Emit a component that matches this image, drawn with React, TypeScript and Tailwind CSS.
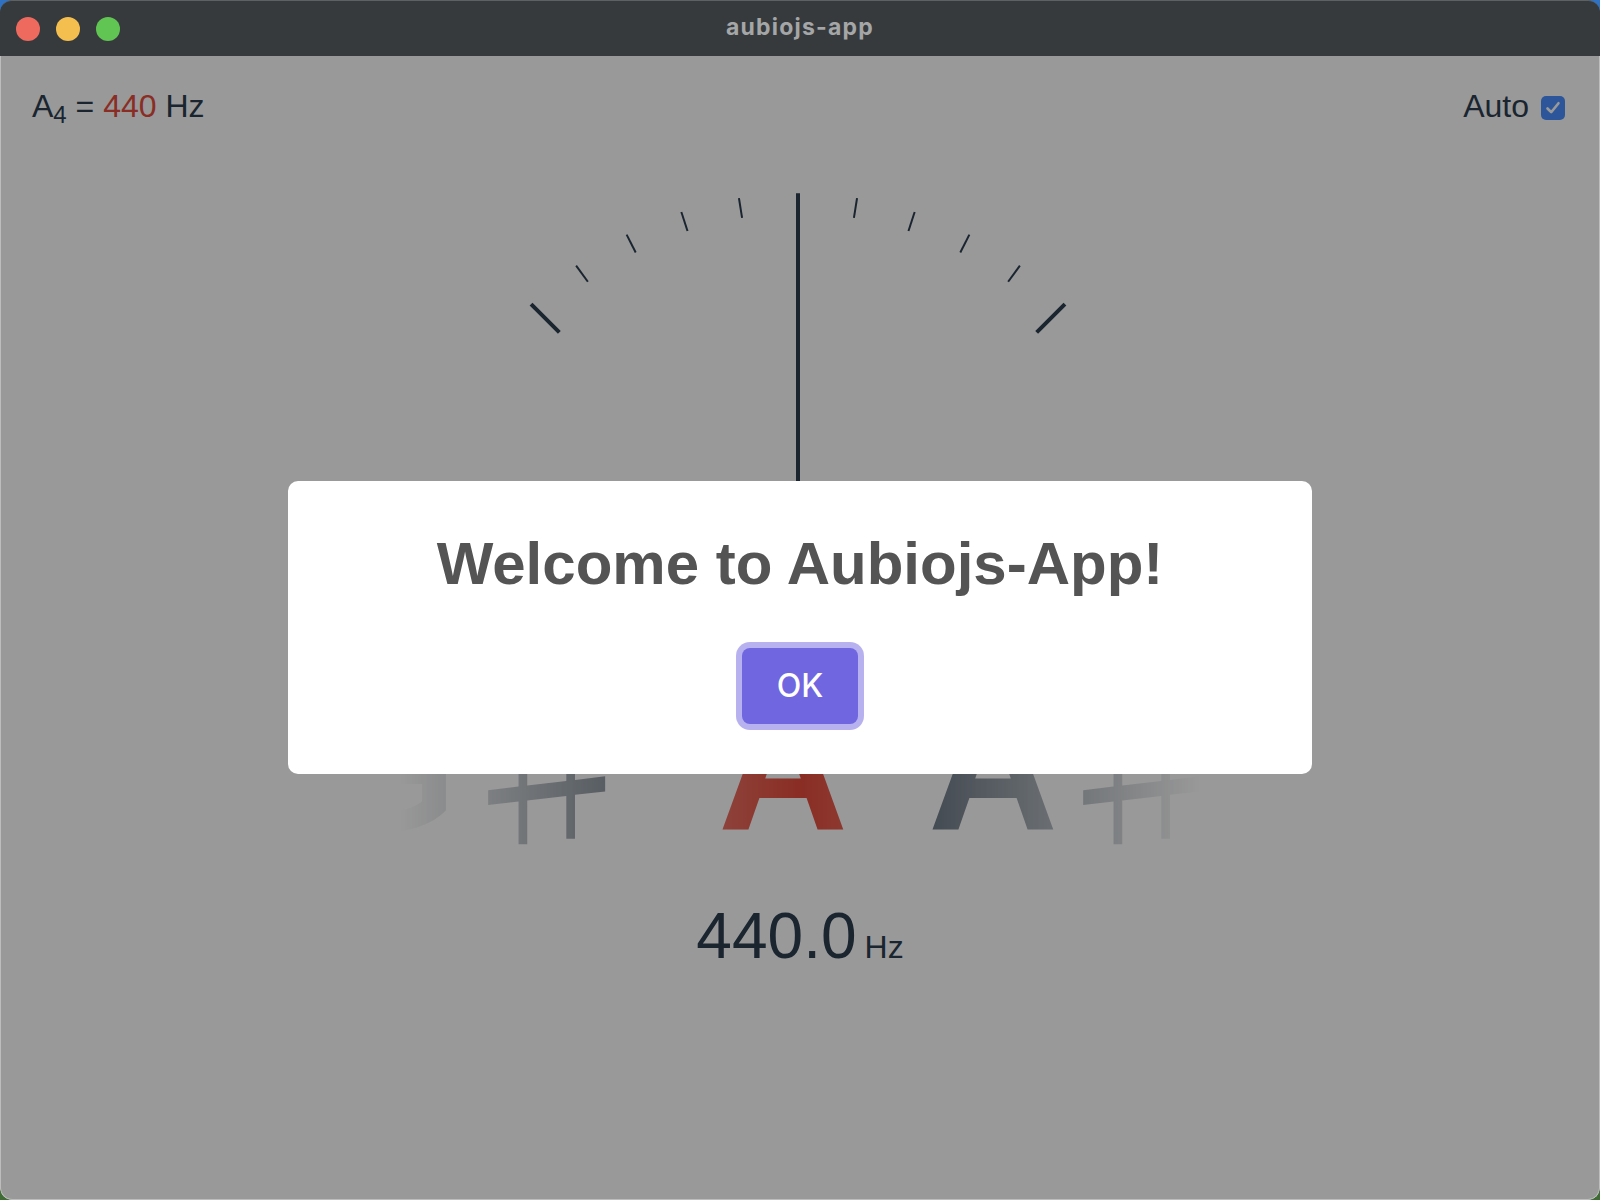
import React from 'react';

// tuner colours (before the dialog backdrop darkens them)
const INK = '#2c3e50';
const ACTIVE = '#e74c3c';

// scale marks every 9deg from -45 to 45, strong at the ends and the middle
const marks = Array.from({ length: 11 }, (_, i) => i * 9 - 45);

const Meter: React.FC = () => {
    const cx = 398;
    const cy = 381;
    const r = 377.5;
    return (
        <svg width="800" height="385" viewBox="0 0 800 385" className="mx-auto block shrink-0">
            {marks.map((deg) => {
                const strong = deg % 45 === 0;
                const len = strong ? 40 : 20;
                const rad = (deg * Math.PI) / 180;
                const s = Math.sin(rad);
                const c = Math.cos(rad);
                return (
                    <line
                        key={deg}
                        x1={cx + r * s}
                        y1={cy - r * c}
                        x2={cx + (r - len) * s}
                        y2={cy - (r - len) * c}
                        stroke={INK}
                        strokeWidth={strong ? 4 : 2}
                    />
                );
            })}
            {/* pointer, sitting at 0 cents */}
            <rect x={cx - 2} y={cy - r} width="4" height={r} fill={INK} />
        </svg>
    );
};

interface NoteProps {
    name: string;
    sharp?: boolean;
    active?: boolean;
    padRight?: string;
    sharpShift?: string;
}

const Note: React.FC<NoteProps> = ({ name, sharp, active, padRight = 'pr-[60px]', sharpShift = 'left-0' }) => (
    <div className={`flex items-start pl-[20px] ${padRight} shrink-0`} style={{ color: active ? ACTIVE : INK }}>
        <span>{name}</span>
        {sharp && (
            <span className={`relative top-[-12px] ${sharpShift} w-[176px] text-center font-['Noto_Sans_CJK_JP',sans-serif] font-normal`}>
                <span className="inline-block scale-x-[1.24]">♯</span>
            </span>
        )}
    </div>
);

const TitleBar: React.FC = () => (
    <div className="grid grid-cols-[1fr_auto_1fr] items-center h-[56px] bg-[#373a3c] border-t border-[#5e6163] rounded-t-[12px] shrink-0">
        <div className="flex items-center gap-[16px] pl-[16px]">
            <span className="w-[24px] h-[24px] rounded-full bg-[#ee6a5f]" />
            <span className="w-[24px] h-[24px] rounded-full bg-[#f5bf4f]" />
            <span className="w-[24px] h-[24px] rounded-full bg-[#61c554]" />
        </div>
        <div className="font-['Inter',sans-serif] font-bold text-[23px] tracking-[1.2px] text-[#a4a6a7] -mt-[2px]">
            aubiojs-app
        </div>
        <div />
    </div>
);

const WelcomeDialog: React.FC = () => (
    <div className="absolute inset-0 bg-black/40 flex items-center justify-center">
        <div className="w-[1024px] bg-white rounded-[10px] pb-[40px] flex flex-col items-center">
            <h2 className="pt-[48px] px-[32px] text-[60px] leading-[69px] font-bold text-[#545454] text-center">
                Welcome to Aubiojs-App!
            </h2>
            <div className="mt-[40px] flex justify-center">
                <button className="m-[10px] px-[35px] py-[20px] font-['Inter',sans-serif] font-medium text-[32px] leading-[36px] text-white bg-[#7066e0] rounded-[8px] shadow-[0_0_0_6px_rgba(112,102,224,0.5)]">
                    OK
                </button>
            </div>
        </div>
    </div>
);

const App: React.FC = () => {
    return (
        <div className="w-[1600px] h-[1200px] bg-[linear-gradient(to_bottom,#2f72c4_50%,#3f6b35_50%)]">
            <div className="h-full flex flex-col rounded-[12px] overflow-hidden">
                <TitleBar />
                <div className="relative flex-1 flex flex-col bg-white border-x border-b border-[#bdbdbd] rounded-b-[12px] overflow-hidden font-['Liberation_Sans',Arial,sans-serif] text-[#2c3e50]">
                    {/* header: reference pitch + auto toggle */}
                    <div className="flex justify-between items-start pt-[30px] pl-[31px] pr-[34px] text-[32px] leading-[40px]">
                        <div>
                            A<sub>4</sub> = <span className="text-[#e74c3c]">440</span> Hz
                        </div>
                        <div className="flex items-center">
                            <span>Auto</span>
                            <span className="ml-[12px] mt-[3px] w-[24px] h-[24px] rounded-[5px] bg-[#4a90ff] flex items-center justify-center">
                                <svg width="16" height="16" viewBox="0 0 16 16" fill="none">
                                    <path d="M2.5 8.5 L6.2 12.2 L13.5 3.2" stroke="#ffffff" strokeWidth="2.6" strokeLinecap="round" strokeLinejoin="round" />
                                </svg>
                            </span>
                        </div>
                    </div>

                    <div className="mt-[64px]">
                        <Meter />
                    </div>

                    {/* notes strip */}
                    <div className="mt-[103px] w-[800px] h-[200px] mx-auto overflow-hidden [mask-image:linear-gradient(to_right,transparent,white,transparent)]">
                        <div className="flex items-start ml-[-103px] text-[180px] leading-none font-bold whitespace-nowrap">
                            <Note name="G" sharp padRight="pr-[65px]" />
                            <Note name="A" active />
                            <Note name="A" sharp sharpShift="left-[-6px]" />
                            <Note name="B" />
                        </div>
                    </div>

                    {/* detected frequency */}
                    <div className="mt-[26px] flex justify-center items-baseline">
                        <span className="text-[64px] leading-none">440.0</span>
                        <span className="text-[32px] leading-none ml-[8px]">Hz</span>
                    </div>

                    <WelcomeDialog />
                </div>
            </div>
        </div>
    );
};

export default App;
